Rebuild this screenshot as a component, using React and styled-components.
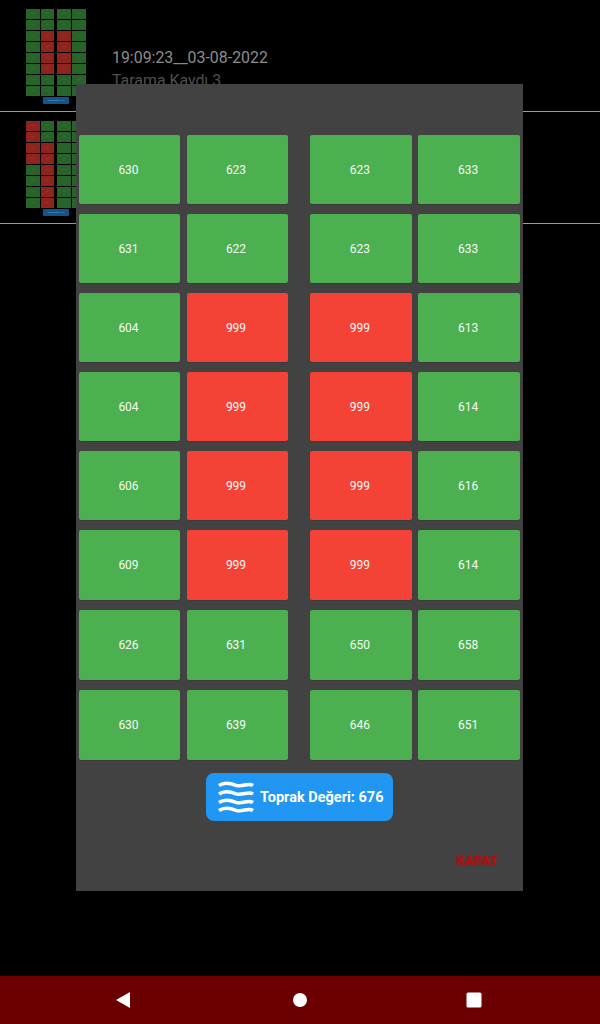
import React from "react";
import styled, { createGlobalStyle } from "styled-components";

const Global = createGlobalStyle`
  html, body { margin: 0; padding: 0; background: #000; }
  body { font-family: Roboto, "Liberation Sans", sans-serif; }
  #root { width: 600px; height: 1024px; }
`;

const Screen = styled.div`
  position: relative;
  width: 600px;
  height: 1024px;
  background: #000;
  overflow: hidden;
  display: flex;
  flex-direction: column;
`;
const List = styled.div`
  flex: 1;
  display: flex;
  flex-direction: column;
`;
const Record = styled.div`
  height: 102px;
  border-bottom: 1px solid #9a9a9a;
  display: flex;
  padding-left: 26px;
  padding-top: 9px;
`;
const Thumb = styled.div`
  width: 60px;
  display: flex;
  flex-direction: column;
  align-items: center;
  gap: 1px;
`;
const ThumbGrid = styled.div`
  width: 60px;
  display: flex;
  flex-direction: column;
  gap: 1.2px;
`;
const ThumbRow = styled.div`
  display: flex;
  justify-content: space-between;
  height: 9.8px;
`;
const ThumbPair = styled.div`
  display: flex;
  gap: 1px;
  width: ${p => p.$w}px;
`;
const ThumbCell = styled.div`
  flex: 1;
  background: ${p => (p.$bad ? "#8f241e" : "#28642a")};
  color: ${p => (p.$bad ? "#a45a55" : "#4f8551")};
  font-size: 1.6px;
  line-height: 9.8px;
  text-align: center;
  overflow: hidden;
`;
const ThumbButton = styled.div`
  width: 26px;
  height: 7px;
  border-radius: 1px;
  background: #14548c;
  color: #7fa6c8;
  font-size: 2px;
  line-height: 7px;
  text-align: center;
`;
const Meta = styled.div`
  margin-left: 26px;
  padding-top: 38px;
  display: flex;
  flex-direction: column;
  gap: 2px;
`;
const Stamp = styled.div`
  font-size: 15.9px;
  line-height: 21px;
  color: #8c8c8c;
`;
const Title = styled.div`
  font-size: 15.9px;
  line-height: 21px;
  color: #4f4f4f;
`;
const NavBar = styled.div`
  height: 48px;
  background: #6b0000;
  display: grid;
  grid-template-columns: 246px 108px 240px;
  align-items: center;
  justify-items: center;
`;
const Overlay = styled.div`
  position: absolute;
  left: 76px;
  top: 84px;
  width: 447px;
  height: 807px;
  background: #424242;
  display: flex;
  flex-direction: column;
  align-items: center;
  padding: 51px 3px 0;
  box-sizing: border-box;
`;
const Grid = styled.div`
  width: 441px;
  display: grid;
  grid-template-rows: repeat(5, 69px) repeat(3, 70px);
  row-gap: 10px;
`;
const Row = styled.div`
  display: flex;
  justify-content: space-between;
`;
const Pair = styled.div`
  display: flex;
  gap: 6.5px;
  width: ${p => p.$w}px;
`;
const Cell = styled.div`
  flex: 1;
  background: ${p => (p.$bad ? "#f44336" : "#4caf50")};
  border-radius: 2px;
  color: #f4faf4;
  font-size: 12px;
  display: flex;
  align-items: center;
  justify-content: center;
  padding-right: 2px;
  box-sizing: border-box;
  box-shadow: 0 1px 1px rgba(0, 0, 0, 0.12);
`;
const SoilButton = styled.div`
  margin-top: 13px;
  width: 187px;
  height: 48px;
  background: #2196f3;
  border-radius: 8px;
  display: flex;
  align-items: center;
  padding-left: 12px;
  gap: 6px;
  box-sizing: border-box;
  color: #fff;
  font-size: 14.5px;
  font-weight: 700;
`;
const SoilLabel = styled.span`
  padding-top: 1px;
`;
const CloseRow = styled.div`
  align-self: stretch;
  display: flex;
  justify-content: flex-end;
  padding: 30px 22px 0 0;
`;
const CloseText = styled.div`
  color: #a81212;
  font-size: 13.5px;
  line-height: 18px;
  font-weight: 700;
  text-shadow: 0 0 2px #a81212;
`;

const modal = [
  [630, 623, 623, 633],
  [631, 622, 623, 633],
  [604, 999, 999, 613],
  [604, 999, 999, 614],
  [606, 999, 999, 616],
  [609, 999, 999, 614],
  [626, 631, 650, 658],
  [630, 639, 646, 651],
];
const secondThumb = [
  [999, 631, 650, 658],
  [999, 622, 623, 633],
  [999, 999, 623, 633],
  [999, 999, 613, 614],
  [606, 999, 616, 616],
  [609, 999, 614, 614],
  [626, 999, 650, 658],
  [630, 999, 646, 651],
];

const Waves = () => (
  <svg width="36" height="32" viewBox="0 0 36 32" fill="none" stroke="#fff" strokeWidth="3.4" aria-hidden="true">
    {[3.5, 12, 20.5, 28.5].map(y => (
      <path
        key={y}
        d={`M1 ${y + 1}C6 ${y - 2.5} 11 ${y - 2} 18 ${y + 0.8}C25 ${y + 3} 30 ${y - 2.5} 35 ${y + 1}`}
      />
    ))}
  </svg>
);

const Back = () => (
  <svg width="16" height="18" viewBox="0 0 16 18" aria-hidden="true">
    <path d="M15 1V17L1 9Z" fill="#fff" />
  </svg>
);
const Home = () => (
  <svg width="16" height="16" viewBox="0 0 16 16" aria-hidden="true">
    <circle cx="8" cy="8" r="7" fill="#fff" />
  </svg>
);
const Recents = () => (
  <svg width="16" height="16" viewBox="0 0 16 16" aria-hidden="true">
    <rect x="0.5" y="0.5" width="15" height="15" rx="1.5" fill="#fff" />
  </svg>
);

const Preview = ({ rows }) => (
  <Thumb>
    <ThumbGrid>
      {rows.map((r, i) => (
        <ThumbRow key={i}>
          <ThumbPair $w={28}>
            <ThumbCell $bad={r[0] === 999}>{r[0]}</ThumbCell>
            <ThumbCell $bad={r[1] === 999}>{r[1]}</ThumbCell>
          </ThumbPair>
          <ThumbPair $w={29}>
            <ThumbCell $bad={r[2] === 999}>{r[2]}</ThumbCell>
            <ThumbCell $bad={r[3] === 999}>{r[3]}</ThumbCell>
          </ThumbPair>
        </ThumbRow>
      ))}
    </ThumbGrid>
    <ThumbButton>Toprak Değeri: 676</ThumbButton>
  </Thumb>
);

export default function App() {
  return (
    <Screen>
      <Global />
      <List>
        <Record>
          <Preview rows={modal} />
          <Meta>
            <Stamp>19:09:23__03-08-2022</Stamp>
            <Title>Tarama Kaydı 3</Title>
          </Meta>
        </Record>
        <Record>
          <Preview rows={secondThumb} />
        </Record>
      </List>
      <NavBar>
        <Back />
        <Home />
        <Recents />
      </NavBar>
      <Overlay>
        <Grid>
          {modal.map((r, i) => (
            <Row key={i}>
              <Pair $w={208.5}>
                <Cell $bad={r[0] === 999}>{r[0]}</Cell>
                <Cell $bad={r[1] === 999}>{r[1]}</Cell>
              </Pair>
              <Pair $w={210}>
                <Cell $bad={r[2] === 999}>{r[2]}</Cell>
                <Cell $bad={r[3] === 999}>{r[3]}</Cell>
              </Pair>
            </Row>
          ))}
        </Grid>
        <SoilButton>
          <Waves />
          <SoilLabel>Toprak Değeri: 676</SoilLabel>
        </SoilButton>
        <CloseRow>
          <CloseText>KAPAT</CloseText>
        </CloseRow>
      </Overlay>
    </Screen>
  );
}
